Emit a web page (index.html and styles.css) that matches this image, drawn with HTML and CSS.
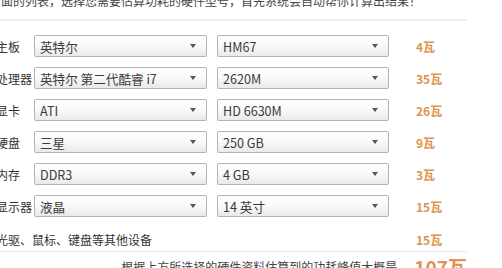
FILE: index.html
```html
<!DOCTYPE html>
<html lang="zh">
<head>
<meta charset="utf-8">
<link rel="stylesheet" href="styles.css">
</head>
<body>
<div class="panel">
  <div class="intro"><span>点击下面的列表，选择您需要估算功耗的硬件型号，首先系统会自动帮你计算出结果！</span></div>
  <div class="rows">
    <div class="row">
      <div class="label">主板</div>
      <div class="sel"><span>英特尔</span><i class="arrow"></i></div>
      <div class="sel"><span>HM67</span><i class="arrow"></i></div>
      <div class="watt">4瓦</div>
    </div>
    <div class="row">
      <div class="label">处理器</div>
      <div class="sel"><span>英特尔 第二代酷睿 i7</span><i class="arrow"></i></div>
      <div class="sel"><span>2620M</span><i class="arrow"></i></div>
      <div class="watt">35瓦</div>
    </div>
    <div class="row">
      <div class="label">显卡</div>
      <div class="sel"><span>ATI</span><i class="arrow"></i></div>
      <div class="sel"><span>HD 6630M</span><i class="arrow"></i></div>
      <div class="watt">26瓦</div>
    </div>
    <div class="row">
      <div class="label">硬盘</div>
      <div class="sel"><span>三星</span><i class="arrow"></i></div>
      <div class="sel"><span>250 GB</span><i class="arrow"></i></div>
      <div class="watt">9瓦</div>
    </div>
    <div class="row">
      <div class="label">内存</div>
      <div class="sel"><span>DDR3</span><i class="arrow"></i></div>
      <div class="sel"><span>4 GB</span><i class="arrow"></i></div>
      <div class="watt">3瓦</div>
    </div>
    <div class="row">
      <div class="label">显示器</div>
      <div class="sel"><span>液晶</span><i class="arrow"></i></div>
      <div class="sel"><span>14 英寸</span><i class="arrow"></i></div>
      <div class="watt">15瓦</div>
    </div>
    <div class="row other">
      <div class="other-label">光驱、鼠标、键盘等其他设备</div>
      <div class="watt">15瓦</div>
    </div>
  </div>
  <div class="total">
    <div class="total-text">根据上方所选择的硬件资料估算到的功耗峰值大概是</div>
    <div class="total-val">107瓦</div>
  </div>
</div>
</body>
</html>
```
FILE: styles.css
```css
html, body {
  margin: 0;
  padding: 0;
  background: #fff;
  overflow: hidden;
}
body {
  width: 502px;
  height: 268px;
  font-family: "Noto Sans CJK SC", "Liberation Sans", sans-serif;
  color: #3a3a3a;
}
.panel {
  margin-left: -4px;
  margin-top: -9px;
  width: 471px;
}
.intro {
  height: 20px;
  line-height: 20px;
  font-size: 12px;
  color: #444;
  white-space: nowrap;
  padding-bottom: 8px;
  border-bottom: 2px solid #eeeeee;
}
.intro span {
  display: inline-block;
  margin-left: -31px;
}
.rows {
  margin-top: 9px;
}
.row {
  display: flex;
  align-items: center;
  height: 32px;
}
.label {
  width: 38px;
  font-size: 12px;
  color: #333;
  white-space: nowrap;
}
.sel {
  position: relative;
  box-sizing: border-box;
  width: 173px;
  height: 22px;
  border: 1px solid #b4b4b4;
  border-radius: 2px;
  background: linear-gradient(#ffffff 0%, #fafafa 45%, #e9e9e9 100%);
  display: flex;
  align-items: center;
  padding-left: 5px;
  font-size: 12.6px;
  color: #3a3a3a;
  white-space: nowrap;
}
.sel + .sel {
  margin-left: 10px;
  width: 172px;
}
.arrow {
  position: absolute;
  right: 10px;
  top: 8px;
  width: 0;
  height: 0;
  border-left: 3px solid transparent;
  border-right: 3px solid transparent;
  border-top: 4px solid #555;
}
.watt {
  margin-left: 27px;
  font-size: 12px;
  font-weight: bold;
  color: #de9450;
  white-space: nowrap;
}
.row.other {
  margin-top: 7px;
  height: 20px;
  padding-bottom: 2px;
  border-bottom: 1px solid #ececec;
}
.other-label {
  width: 393px;
  font-size: 12px;
  color: #333;
  white-space: nowrap;
}
.total {
  display: flex;
  align-items: center;
  height: 24px;
  margin-top: 2px;
}
.total-text {
  width: 404px;
  text-align: right;
  font-size: 12px;
  color: #444;
  white-space: nowrap;
}
.total-val {
  margin-left: 17px;
  font-size: 19px;
  font-weight: bold;
  color: #de9450;
  white-space: nowrap;
}
```
